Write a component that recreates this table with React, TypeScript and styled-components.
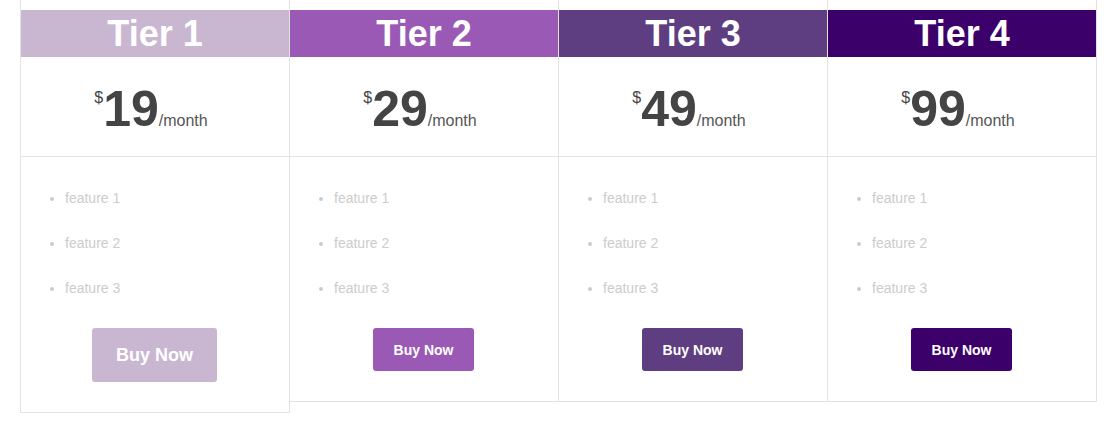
import React from 'react'
import styled, { createGlobalStyle } from 'styled-components'

const GlobalStyle = createGlobalStyle`
  body {
    margin: 0;
    background: #fff;
    font-family: 'Liberation Sans', Arial, sans-serif;
  }
`

const Table = styled.div`
  display: flex;
  align-items: flex-start;
  padding-left: 20px;
`

const Card = styled.div`
  width: 270px;
  box-sizing: border-box;
  border: 1px solid #e3e3e3;
  border-top: none;
  padding-top: 10px;
  background: #fff;
  & + & {
    margin-left: -1px;
  }
`

const Header = styled.div<{ $bg: string }>`
  height: 47px;
  line-height: 47px;
  background: ${p => p.$bg};
  color: #fff;
  font-size: 36px;
  font-weight: bold;
  text-align: center;
`

const PriceBox = styled.div`
  height: 100px;
  box-sizing: border-box;
  padding: 24px 8px 0 0;
  border-bottom: 1px solid #e3e3e3;
  text-align: center;
  color: #444;
  line-height: 56px;
`

const Currency = styled.span`
  font-size: 16px;
  line-height: 1;
  vertical-align: 23px;
`

const Amount = styled.span`
  font-size: 50px;
  font-weight: bold;
`

const Period = styled.span`
  font-size: 16px;
  line-height: 1;
  color: #555;
`

const Features = styled.ul`
  margin: 0;
  padding: 18px 0 18px 44px;
  list-style: disc;
`

const Feature = styled.li`
  font-size: 14px;
  line-height: 16px;
  padding: 14.5px 0;
  color: #ccc;
`

const Footer = styled.div`
  display: flex;
  justify-content: center;
  padding-bottom: 30px;
`

const BuyButton = styled.a<{ $bg: string; $big?: boolean }>`
  display: flex;
  align-items: center;
  justify-content: center;
  width: ${p => (p.$big ? '125px' : '101px')};
  height: ${p => (p.$big ? '54px' : '43px')};
  margin-left: -1px;
  border-radius: 3px;
  background: ${p => p.$bg};
  color: #fff;
  font-size: ${p => (p.$big ? '18px' : '14px')};
  font-weight: bold;
  text-decoration: none;
`

const tiers = [
  { name: 'Tier 1', price: 19, color: '#c9b7d2', big: true },
  { name: 'Tier 2', price: 29, color: '#9b59b6' },
  { name: 'Tier 3', price: 49, color: '#5e3e80' },
  { name: 'Tier 4', price: 99, color: '#3c006b' },
]

const App = () => {
  return (
    <>
      <GlobalStyle />
      <Table>
        {tiers.map(t => (
          <Card key={t.name}>
            <Header $bg={t.color}>{t.name}</Header>
            <PriceBox>
              <Currency>$</Currency>
              <Amount>{t.price}</Amount>
              <Period>/month</Period>
            </PriceBox>
            <Features>
              <Feature>feature 1</Feature>
              <Feature>feature 2</Feature>
              <Feature>feature 3</Feature>
            </Features>
            <Footer>
              <BuyButton href="#" $bg={t.color} $big={t.big}>Buy Now</BuyButton>
            </Footer>
          </Card>
        ))}
      </Table>
    </>
  )
}

export default App
